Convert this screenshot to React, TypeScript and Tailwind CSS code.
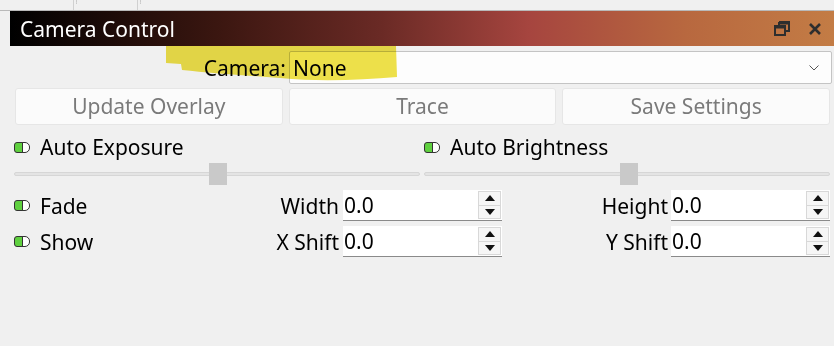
import React from "react";

const font = { fontFamily: '"Noto Sans", "Open Sans", sans-serif' };

function Toggle() {
    return (
        <svg width="16" height="11" viewBox="0 0 16 11" className="shrink-0">
            <rect x="3.5" y="0.5" width="12" height="10" rx="4.5" fill="#fff" stroke="#333" />
            <path d="M3 0.5 H8.5 V10.5 H3 A2.5 2.5 0 0 1 0.5 8 V3 A2.5 2.5 0 0 1 3 0.5 Z" fill="#5fd03f" stroke="#333" />
        </svg>
    );
}

function Slider({ pos }: { pos: number }) {
    return (
        <div className="relative w-full h-[22px] flex items-center">
            <div className="w-full h-[4px] bg-[#e4e4e4] border border-[#d6d6d6] rounded-sm" />
            <div className="absolute top-0 w-[18px] h-[22px] bg-[#c9c9c9]" style={{ left: pos }} />
        </div>
    );
}

function SpinBox({ value }: { value: string }) {
    return (
        <div className="flex w-[159px] h-[31px] bg-white border-b border-[#8a8a8a]">
            <div className="flex-1 flex items-center pl-[1px] pt-[2px] text-[21px] text-black">{value}</div>
            <div className="flex flex-col w-[23px] mt-[1px] mb-[1px] mr-[1px] border border-[#d8d8d8] bg-[#f6f6f6]">
                <div className="flex-1 flex items-center justify-center border-b border-[#d8d8d8]">
                    <svg width="10" height="6" viewBox="0 0 10 6"><path d="M0 6 L5 0 L10 6 Z" fill="#111" /></svg>
                </div>
                <div className="flex-1 flex items-center justify-center">
                    <svg width="10" height="6" viewBox="0 0 10 6"><path d="M0 0 L10 0 L5 6 Z" fill="#111" /></svg>
                </div>
            </div>
        </div>
    );
}

function Button({ children }: { children: React.ReactNode }) {
    return (
        <div className="flex-1 h-[37px] flex items-center justify-center pt-[1px] rounded-[3px] bg-[#fbfbfb] border border-[#e6e6e6] text-[21px] text-[#7a7a7a]">
            {children}
        </div>
    );
}

export default function App() {
    return (
        <div className="w-[834px] h-[346px] bg-[#f0f0f0] overflow-hidden relative" style={font}>
            {/* Top dock strip */}
            <div className="h-[11px] flex border-b border-[#b9b9b9]">
                <div className="w-[74px] border-r border-[#d0d0d0]" />
                <div className="w-[64px] border-r border-[#d0d0d0] pl-[2px] text-[5px] leading-[4px] text-[#999]">⁞</div>
                <div className="flex-1 pl-[2px] text-[5px] leading-[4px] text-[#999]">⁞</div>
            </div>

            {/* Title bar */}
            <div className="ml-[10px] h-[35px] flex items-center justify-between pl-[10px] pr-[12px] bg-[linear-gradient(90deg,#000000_0%,#3a1610_25%,#6a2a25_45%,#a6453f_63%,#b8683f_82%,#c37c45_100%)]">
                <span className="text-white text-[21px] pt-[2px]">Camera Control</span>
                <div className="flex items-center gap-[18px]">
                    <svg width="16" height="15" viewBox="0 0 16 15">
                        <path d="M5 1 H15 V10 H11 M5 1 V4" fill="none" stroke="#2e2e2e" strokeWidth="2" />
                        <path d="M5 2 H15" stroke="#2e2e2e" strokeWidth="3" />
                        <rect x="1" y="5" width="10" height="9" fill="none" stroke="#2e2e2e" strokeWidth="2" />
                        <path d="M1 6 H11" stroke="#2e2e2e" strokeWidth="3" />
                    </svg>
                    <svg width="14" height="14" viewBox="0 0 14 14">
                        <path d="M2 2 L12 12 M12 2 L2 12" stroke="#2e2e2e" strokeWidth="2.6" />
                    </svg>
                </div>
            </div>

            {/* Camera row */}
            <div className="relative flex items-center mt-[5px] h-[33px]">
                <div className="w-[288px] text-right text-[21px] text-black pr-[2px] pt-[2px]">Camera:</div>
                <div className="ml-[1px] w-[543px] h-[33px] flex items-center justify-between pl-[3px] pr-[12px] bg-[#fdfdfd] border border-[#c4c4c4] rounded-[2px]">
                    <span className="text-[21px] text-black pt-[2px]">None</span>
                    <svg width="10" height="6" viewBox="0 0 10 6"><path d="M0.5 0.5 L5 5 L9.5 0.5" fill="none" stroke="#555" /></svg>
                </div>
            </div>

            {/* Buttons */}
            <div className="flex gap-[6px] pl-[15px] pr-[4px] mt-[4px]">
                <Button>Update Overlay</Button>
                <Button>Trace</Button>
                <Button>Save Settings</Button>
            </div>

            {/* Auto rows */}
            <div className="flex mt-[6px] pl-[14px] pr-[4px] gap-[4px]">
                <div className="flex-1 flex flex-col">
                    <div className="flex items-center gap-[10px] h-[32px]">
                        <Toggle />
                        <span className="text-[21px] text-black pt-[2px]">Auto Exposure</span>
                    </div>
                    <Slider pos={195} />
                </div>
                <div className="flex-1 flex flex-col">
                    <div className="flex items-center gap-[10px] h-[32px]">
                        <Toggle />
                        <span className="text-[21px] text-black pt-[2px]">Auto Brightness</span>
                    </div>
                    <Slider pos={196} />
                </div>
            </div>

            {/* Fade / Show rows */}
            <div className="flex flex-col gap-[5px] mt-[5px] pl-[14px] pr-[4px]">
                {[
                    { cb: "Fade", l1: "Width", l2: "Height" },
                    { cb: "Show", l1: "X Shift", l2: "Y Shift" },
                ].map((r) => (
                    <div key={r.cb} className="flex items-center h-[31px]">
                        <div className="w-[200px] flex items-center gap-[10px]">
                            <Toggle />
                            <span className="text-[21px] text-black pt-[2px]">{r.cb}</span>
                        </div>
                        <div className="w-[129px] text-right text-[21px] text-black pr-[4px] pt-[2px]">{r.l1}</div>
                        <SpinBox value="0.0" />
                        <div className="w-[169px] text-right text-[21px] text-black pr-[3px] pt-[2px]">{r.l2}</div>
                        <SpinBox value="0.0" />
                    </div>
                ))}
            </div>

            {/* Yellow marker annotation */}
            <svg className="absolute left-0 top-0 pointer-events-none mix-blend-multiply" width="834" height="346">
                <path d="M166 46 L396 46 L397 77 C360 80 320 82 280 78 C240 75 210 73 182 70 L181 64 L166 63 Z" fill="#efe24a" />
            </svg>
        </div>
    );
}
